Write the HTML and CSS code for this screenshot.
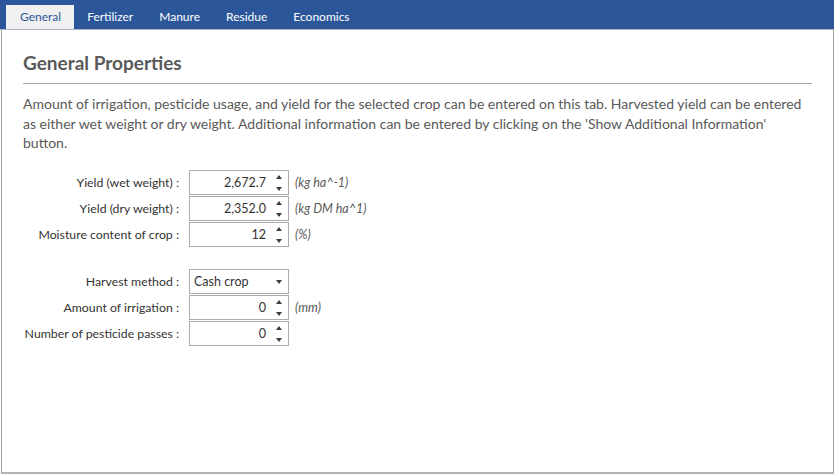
FILE: index.html
```html
<!DOCTYPE html>
<html>
<head>
<meta charset="utf-8">
<link rel="stylesheet" href="styles.css">
</head>
<body>
<div class="app">
  <nav class="tabs">
    <span class="tab active">General</span>
    <span class="tab">Fertilizer</span>
    <span class="tab">Manure</span>
    <span class="tab">Residue</span>
    <span class="tab">Economics</span>
  </nav>
  <main class="panel">
    <h1 class="title">General Properties</h1>
    <p class="intro">Amount of irrigation, pesticide usage, and yield for the selected crop can be entered on this tab. Harvested yield can be entered as either wet weight or dry weight. Additional information can be entered by clicking on the 'Show Additional Information' button.</p>
    <div class="group">
      <div class="row">
        <span class="label">Yield (wet weight) :</span>
        <div class="field"><span class="value">2,672.7</span><span class="spin"><i class="up"></i><i class="down"></i></span></div>
        <span class="unit">(kg ha^-1)</span>
      </div>
      <div class="row">
        <span class="label">Yield (dry weight) :</span>
        <div class="field"><span class="value">2,352.0</span><span class="spin"><i class="up"></i><i class="down"></i></span></div>
        <span class="unit">(kg DM ha^1)</span>
      </div>
      <div class="row">
        <span class="label">Moisture content of crop :</span>
        <div class="field"><span class="value">12</span><span class="spin"><i class="up"></i><i class="down"></i></span></div>
        <span class="unit">(%)</span>
      </div>
    </div>
    <div class="group">
      <div class="row">
        <span class="label">Harvest method :</span>
        <div class="field select"><span class="value">Cash crop</span><span class="caret"><i class="down"></i></span></div>
        <span class="unit"></span>
      </div>
      <div class="row">
        <span class="label">Amount of irrigation :</span>
        <div class="field"><span class="value">0</span><span class="spin"><i class="up"></i><i class="down"></i></span></div>
        <span class="unit">(mm)</span>
      </div>
      <div class="row">
        <span class="label">Number of pesticide passes :</span>
        <div class="field"><span class="value">0</span><span class="spin"><i class="up"></i><i class="down"></i></span></div>
        <span class="unit"></span>
      </div>
    </div>
  </main>
</div>
</body>
</html>
```

FILE: styles.css
```css
html, body {
  margin: 0;
  padding: 0;
  background: #ffffff;
}
body {
  font-family: "Lato", "Open Sans", sans-serif;
  color: #333333;
}
.app {
  width: 834px;
  height: 474px;
  display: flex;
  flex-direction: column;
  box-sizing: border-box;
}
.tabs {
  display: flex;
  align-items: flex-end;
  height: 29px;
  padding-left: 6px;
  background: #2b579a;
  border-bottom: 1px solid #a9b4c4;
  flex: none;
}
.tab {
  height: 24px;
  line-height: 24px;
  padding: 0 13px;
  font-size: 12px;
  color: #ffffff;
}
.tab.active {
  background: #f0f0f0;
  color: #2b579a;
  padding: 0 13px 0 14px;
}
.panel {
  flex: 1;
  border-left: 1px solid #a0a0a0;
  border-right: 1px solid #a0a0a0;
  border-bottom: 2px solid #b4b4b4;
  margin-left: 1px;
  padding: 21px 21px 0 21px;
}
.title {
  margin: 0;
  font-size: 19px;
  font-weight: 700;
  color: #595959;
  line-height: 24px;
  padding-bottom: 8px;
  border-bottom: 1px solid #a6a6a6;
}
.intro {
  margin: 10px 0 17px 0;
  font-size: 14px;
  line-height: 19.5px;
  color: #595959;
}
.group {
  display: flex;
  flex-direction: column;
  gap: 1px;
  margin-bottom: 22px;
}
.row {
  display: grid;
  grid-template-columns: 156px 100px auto;
  column-gap: 10px;
  align-items: center;
}
.label {
  text-align: right;
  font-size: 12.3px;
  color: #333333;
}
.field {
  height: 25px;
  box-sizing: border-box;
  border: 1px solid #ababab;
  display: flex;
  align-items: center;
  font-size: 12.5px;
  color: #333333;
}
.field .value {
  flex: 1;
  text-align: right;
  padding-right: 5px;
}
.field.select .value {
  text-align: left;
  padding-left: 4px;
}
.spin, .caret {
  width: 17px;
  height: 100%;
  display: flex;
  flex-direction: column;
  align-items: center;
  justify-content: space-between;
  padding: 4px 2px 3px 0;
  box-sizing: border-box;
}
.caret {
  justify-content: center;
}
.up {
  width: 0;
  height: 0;
  border-left: 3px solid transparent;
  border-right: 3px solid transparent;
  border-bottom: 4px solid #3c3c3c;
}
.down {
  width: 0;
  height: 0;
  border-left: 3px solid transparent;
  border-right: 3px solid transparent;
  border-top: 4px solid #3c3c3c;
}
.unit {
  font-size: 12.5px;
  font-style: italic;
  color: #595959;
  margin-left: -4px;
}
```
